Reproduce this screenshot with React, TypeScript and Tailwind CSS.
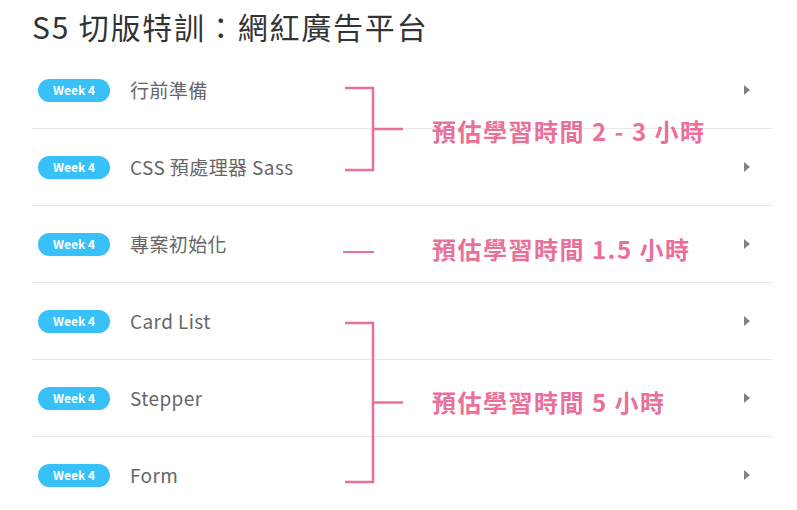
import React from "react";

const rows = [
  "行前準備",
  "CSS 預處理器 Sass",
  "專案初始化",
  "Card List",
  "Stepper",
  "Form",
];

const PINK = "#ea6f99";

function Bracket({ height }: { height: number }) {
  return (
    <svg width={64} height={height + 4} viewBox={`0 0 64 ${height + 4}`} className="shrink-0">
      <path d={`M2 2 H30 V${height + 2} H2`} fill="none" stroke={PINK} strokeWidth={2.5} />
      <path d={`M30 ${height / 2 + 2} H60`} fill="none" stroke={PINK} strokeWidth={2.5} />
    </svg>
  );
}

function Note({ children, className = "" }: { children: React.ReactNode; className?: string }) {
  return (
    <span className={`text-[24px] leading-[32px] font-bold text-[#ea6f99] tracking-[1.5px] whitespace-nowrap ${className}`}>
      {children}
    </span>
  );
}

export default function App() {
  const font = { fontFamily: '"Noto Sans CJK TC", "Noto Sans", sans-serif' };
  return (
    <div className="relative w-[797px] h-[510px] overflow-hidden bg-white" style={font}>
      <div className="pl-[32px] pr-[24px]">
        <h1 className="pt-[7px] mb-[6px] h-[46px] text-[30px] leading-[38px] text-[#333] tracking-[1.8px] font-normal">
          S5 切版特訓：網紅廣告平台
        </h1>
        <div className="flex flex-col">
          {rows.map((r, i) => (
            <div
              key={i}
              className="flex items-center h-[77px] border-b border-[#e9e9e9] pl-[6px] pr-[23px]"
            >
              <span className="flex items-center justify-center w-[72px] h-[23px] rounded-full bg-[#38c1f8] text-white text-[12px] font-bold leading-none">
                Week 4
              </span>
              <span className="ml-[20px] text-[19px] text-[#666] leading-none tracking-[0.4px] -translate-y-[1px]">{r}</span>
              <span className="ml-auto w-0 h-0 border-y-[5px] border-y-transparent border-l-[6px] border-l-[#877f84]" />
            </div>
          ))}
        </div>
      </div>

      {/* annotation layer over the list */}
      <div className="absolute left-[343px] top-[51px] flex flex-col">
        <div className="h-[154px] pt-[2px] flex items-center gap-[25px]">
          <Bracket height={82} />
          <Note className="mt-[4px]">預估學習時間 2 - 3 小時</Note>
        </div>
        <div className="h-[77px] pt-[11px] flex items-center gap-[58px]">
          <span className="w-[31px] h-[2.5px] mt-[6px] bg-[#ea6f99]" />
          <Note>預估學習時間 1.5 小時</Note>
        </div>
        <div className="h-[231px] pt-[9px] flex items-center gap-[25px]">
          <Bracket height={159} />
          <Note>預估學習時間 5 小時</Note>
        </div>
      </div>
    </div>
  );
}
